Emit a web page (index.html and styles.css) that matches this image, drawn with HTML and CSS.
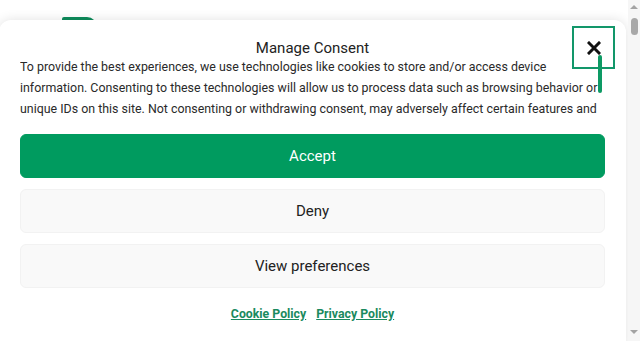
FILE: index.html
```html
<!DOCTYPE html>
<html lang="en">
<head>
    <meta charset="UTF-8">
    <meta name="viewport" content="width=device-width, initial-scale=1.0">
    <title>Manage Consent</title>
    <link rel="stylesheet" href="styles.css">
</head>
<body>
    <div class="page">
        <div class="viewport">
            <header class="site-header">
                <div class="logo"></div>
            </header>

            <div class="cookie-banner">
                <div class="cookie-header">
                    <div class="cookie-title">Manage Consent</div>
                    <button class="cookie-close" aria-label="Close">
                        <svg width="14" height="14" viewBox="0 0 14 14">
                            <path d="M2 2 L12 12 M12 2 L2 12" stroke="#111" stroke-width="3" stroke-linecap="square"/>
                        </svg>
                    </button>
                </div>

                <div class="cookie-message">
                    To provide the best experiences, we use technologies like cookies to store and/or access device information. Consenting to these technologies will allow us to process data such as browsing behavior or unique IDs on this site. Not consenting or withdrawing consent, may adversely affect certain features and functions.
                </div>

                <div class="cookie-buttons">
                    <button class="btn btn-accept">Accept</button>
                    <button class="btn btn-light">Deny</button>
                    <button class="btn btn-light">View preferences</button>
                </div>

                <div class="cookie-links">
                    <a href="#">Cookie Policy</a>
                    <a href="#">Privacy Policy</a>
                </div>
            </div>
        </div>

        <div class="scrollbar">
            <span class="arrow-up"></span>
            <span class="thumb"></span>
            <span class="arrow-down"></span>
        </div>
    </div>
</body>
</html>
```

FILE: styles.css
```css
* {
    margin: 0;
    padding: 0;
    box-sizing: border-box;
}

body {
    font-family: Roboto, "Noto Sans", Arial, sans-serif;
    background: #fff;
    color: #222;
    overflow: hidden;
}

.page {
    display: flex;
    height: 341px;
}

.viewport {
    flex: 1;
    position: relative;
    overflow: hidden;
    background: #fff;
}

.site-header {
    padding: 17px 0 0 62px;
}

.logo {
    width: 35px;
    height: 14px;
    background: #0d8c5c;
    border-radius: 2px 10px 0 0;
}

/* the consent modal lies over the page */
.cookie-banner {
    position: absolute;
    top: 20px;
    left: -1px;
    right: 2px;
    bottom: -12px;
    background: #fff;
    border-radius: 12px;
    box-shadow: 0 0 12px rgba(0, 0, 0, 0.12);
    padding: 20px 21px 0 21px;
}

.cookie-header {
    position: relative;
}

.cookie-title {
    text-align: center;
    font-size: 15px;
    line-height: 16px;
    color: #222;
}

.cookie-close {
    position: absolute;
    top: -14px;
    right: -10px;
    width: 43px;
    height: 43px;
    background: none;
    border: 2px solid #12976a;
    display: flex;
    align-items: center;
    justify-content: center;
    cursor: pointer;
}

.cookie-close::after {
    content: "";
    position: absolute;
    left: 24px;
    top: 27px;
    width: 4px;
    height: 38px;
    background: #0d9a64;
    border-radius: 2px;
}

.cookie-message {
    font-size: 12.4px;
    line-height: 21px;
    height: 63px;
    overflow: hidden;
    color: #2a2a2a;
}

.cookie-buttons {
    display: flex;
    flex-direction: column;
    gap: 11px;
    margin-top: 15px;
}

.btn {
    height: 44px;
    width: 100%;
    border-radius: 6px;
    font-family: inherit;
    font-size: 15px;
    cursor: pointer;
}

.btn-accept {
    background: #009b5f;
    border: 1px solid #009b5f;
    color: #fff;
}

.btn-light {
    background: #f9f9f9;
    border: 1px solid #f2f2f2;
    color: #222;
}

.cookie-links {
    display: flex;
    justify-content: center;
    gap: 10px;
    margin-top: 19px;
}

.cookie-links a {
    color: #1a8a5e;
    font-size: 12.3px;
    font-weight: 700;
    text-decoration: underline;
}

.scrollbar {
    width: 12px;
    background: #f6f6f6;
    display: flex;
    flex-direction: column;
    align-items: center;
    padding-top: 5px;
}

.arrow-up {
    width: 0;
    height: 0;
    border-left: 4px solid transparent;
    border-right: 4px solid transparent;
    border-bottom: 4px solid #a3a3a3;
}

.thumb {
    width: 7px;
    height: 17px;
    margin-top: 9px;
    background: #a8a8a8;
    border-radius: 4px;
}

.arrow-down {
    margin-top: auto;
    margin-bottom: 7px;
    width: 0;
    height: 0;
    border-left: 4px solid transparent;
    border-right: 4px solid transparent;
    border-top: 4px solid #a3a3a3;
}
```
